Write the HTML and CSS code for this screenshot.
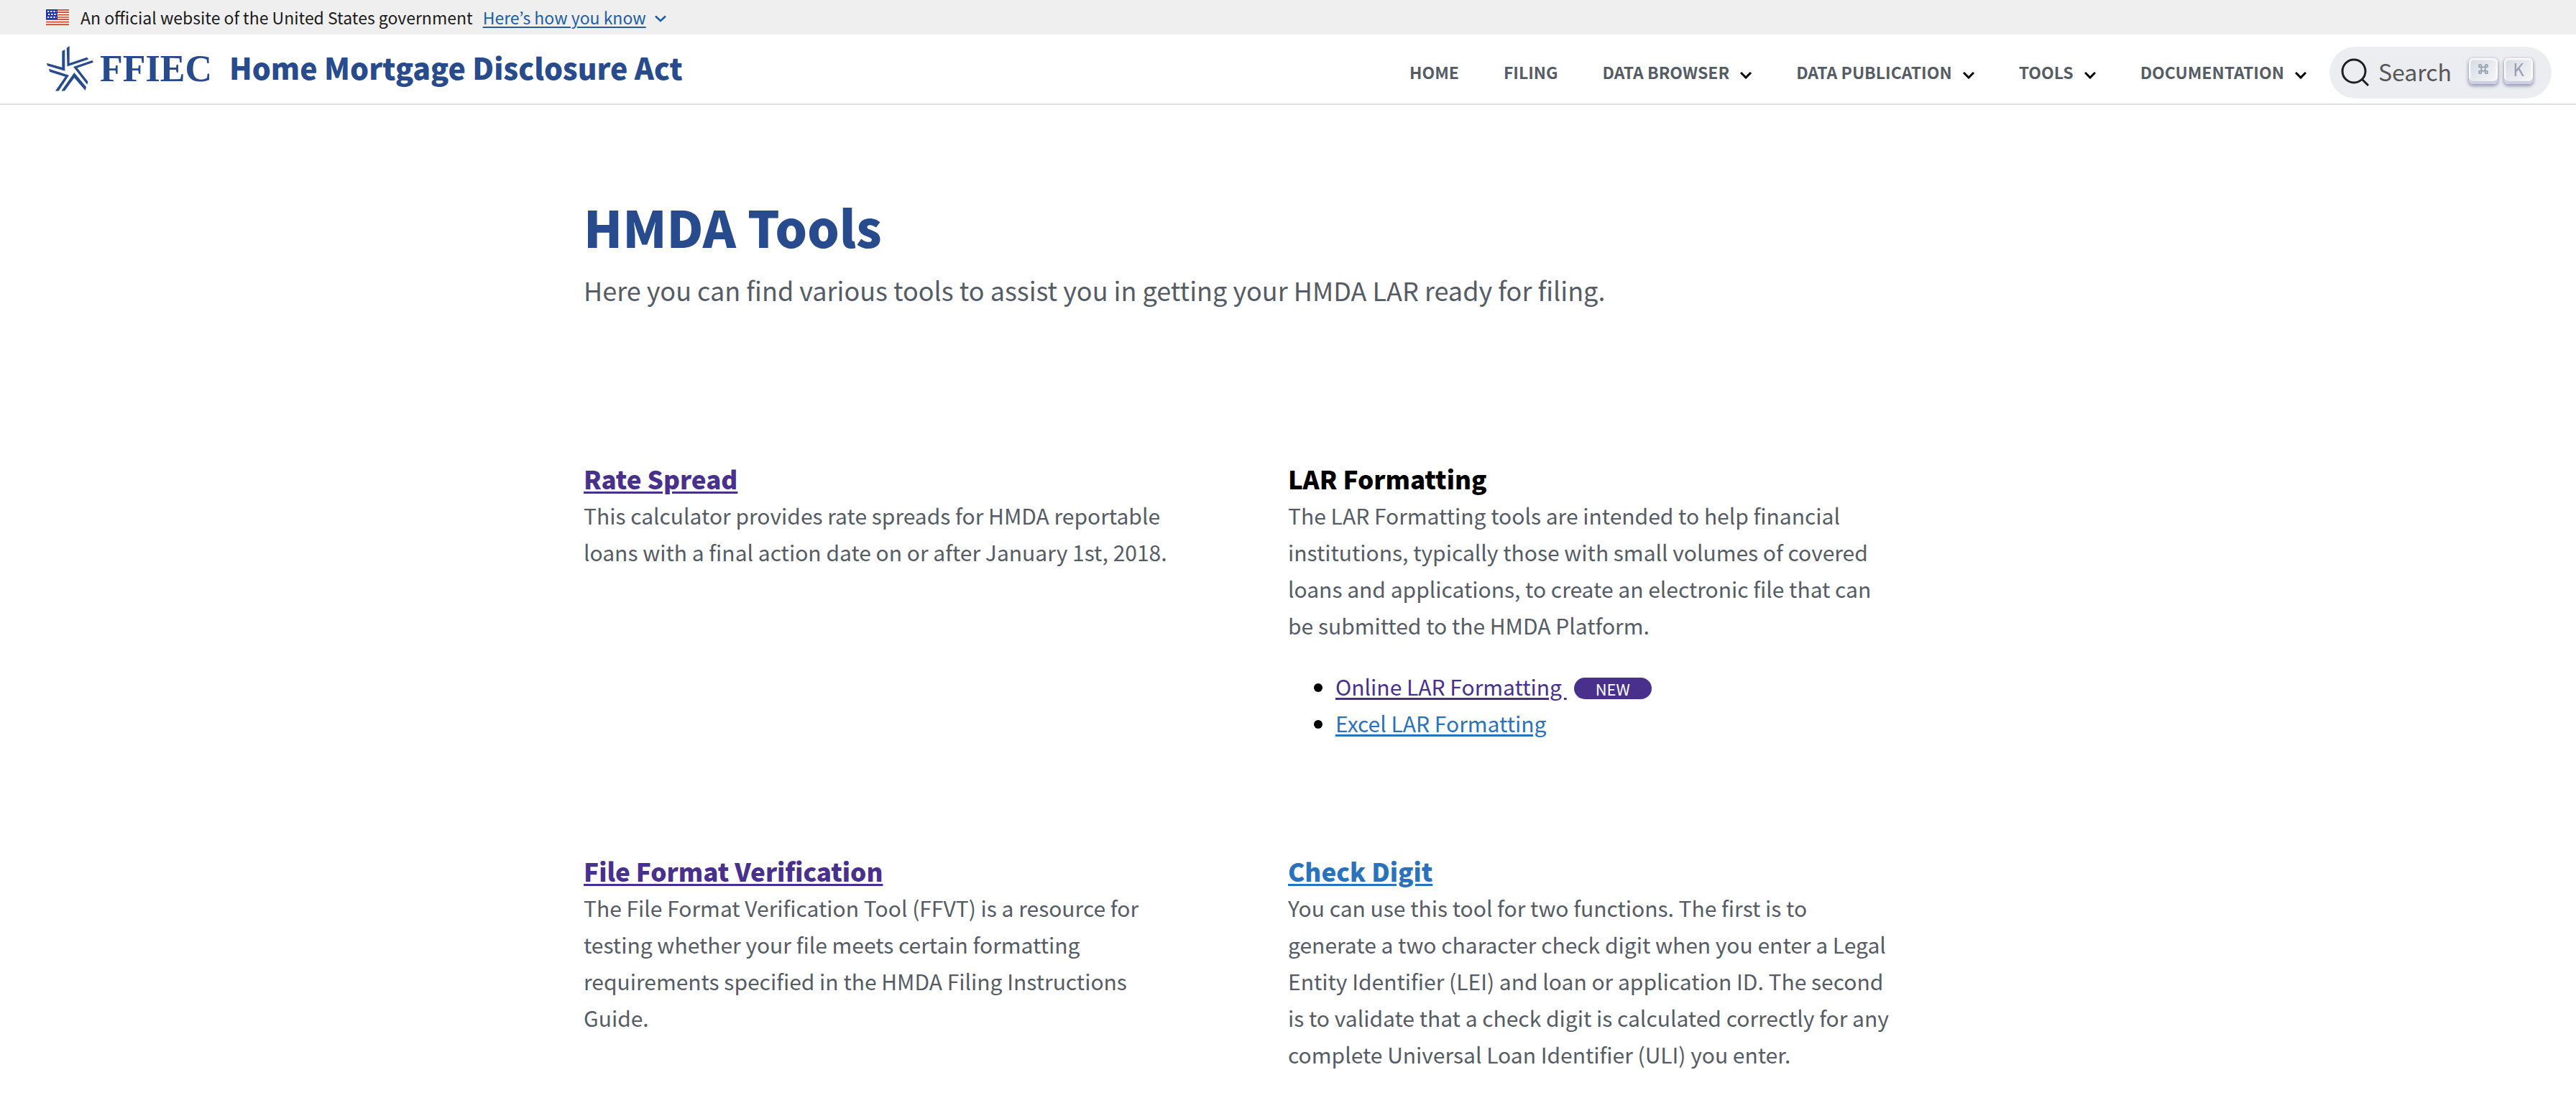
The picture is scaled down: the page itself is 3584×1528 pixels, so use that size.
FILE: index.html
```html
<!DOCTYPE html>
<html lang="en">
<head>
<meta charset="utf-8">
<title>HMDA Tools</title>
<link rel="stylesheet" href="styles.css">
</head>
<body>
<div class="banner">
  <svg class="flag" viewBox="0 0 32 22" aria-hidden="true">
    <rect width="32" height="22" fill="#fff"/>
    <path d="M0 .8h32M0 4.2h32M0 7.6h32M0 11h32M0 14.2h32M0 17.6h32M0 21.2h32" stroke="#db3e1f" stroke-width="1.7"/>
    <rect width="16" height="14" fill="#1e33b1"/>
    <path d="M2 3h13M3 7h13M2 11h13" stroke="#fff" stroke-width="2.2" stroke-dasharray="2.2 2"/>
  </svg>
  <span>An official website of the United States government</span>
  <button class="banner-button" type="button"><span>Here’s how you know</span>
    <svg class="chevron" viewBox="0 0 16 10" aria-hidden="true"><path d="M1 1.5l7 6.5 7-6.5" fill="none" stroke="currentColor" stroke-width="2.6"/></svg>
  </button>
</div>
<header class="header">
  <a class="brand" href="#">
    <svg class="star" viewBox="0 0 66 64" aria-hidden="true">
      <path fill="#274b8c" d="M1 23.7L22.3 29.8V7l4-2v29.700L2 27.500zM28.700 2.700L32.700 0v24L57 15.700l2.300 2.800-29.800 10zM64.300 20L66 22.700l-22.500 7.800 14.800 19-1 4.200L38 29zM39.300 37L56 57l-1.300 5-15.400-17.700L26 62.500h-4.700zM3.700 31.700l28.300 9-14.300 21.800H13l13.700-19.800L5.300 36z"/>
    </svg>
    <span class="ffiec">FFIEC</span>
    <span class="brand-title">Home Mortgage Disclosure Act</span>
  </a>
  <nav class="nav">
    <a href="#">HOME</a>
    <a href="#">FILING</a>
    <a href="#">DATA BROWSER <svg class="caret" viewBox="0 0 16 10" aria-hidden="true"><path d="M1 1l7 7 7-7"/></svg></a>
    <a href="#">DATA PUBLICATION <svg class="caret" viewBox="0 0 16 10" aria-hidden="true"><path d="M1 1l7 7 7-7"/></svg></a>
    <a href="#">TOOLS <svg class="caret" viewBox="0 0 16 10" aria-hidden="true"><path d="M1 1l7 7 7-7"/></svg></a>
    <a href="#">DOCUMENTATION <svg class="caret" viewBox="0 0 16 10" aria-hidden="true"><path d="M1 1l7 7 7-7"/></svg></a>
    <button class="search" type="button">
      <svg class="glass" viewBox="0 0 40 40" aria-hidden="true"><circle cx="18" cy="18" r="16"/><path d="M29 29l9 9"/></svg>
      <span class="search-label">Search</span>
      <kbd class="key"><svg viewBox="0 0 16 16" aria-hidden="true"><path d="M5 5h6v6H5zM5 5H3a2 2 0 1 1 2-2zM11 5V3a2 2 0 1 1 2 2zM11 11h2a2 2 0 1 1-2 2zM5 11v2a2 2 0 1 1-2-2z"/></svg></kbd>
      <kbd class="key">K</kbd>
    </button>
  </nav>
</header>
<main class="main">
  <h1>HMDA Tools</h1>
  <p class="lead">Here you can find various tools to assist you in getting your HMDA LAR ready for filing.</p>
  <div class="grid">
    <section>
      <h2><a class="visited" href="#">Rate Spread</a></h2>
      <p>This calculator provides rate spreads for HMDA reportable loans with a final action date on or after January 1st, 2018.</p>
    </section>
    <section>
      <h2>LAR Formatting</h2>
      <p>The LAR Formatting tools are intended to help financial institutions, typically those with small volumes of covered loans and applications, to create an electronic file that can be submitted to the HMDA Platform.</p>
      <ul>
        <li><a class="visited" href="#">Online LAR Formatting&nbsp;</a><span class="badge">NEW</span></li>
        <li><a href="#">Excel LAR Formatting</a></li>
      </ul>
    </section>
    <section>
      <h2><a class="visited" href="#">File Format Verification</a></h2>
      <p>The File Format Verification Tool (FFVT) is a resource for testing whether your file meets certain formatting requirements specified in the HMDA Filing Instructions Guide.</p>
    </section>
    <section>
      <h2><a href="#">Check Digit</a></h2>
      <p>You can use this tool for two functions. The first is to generate a two character check digit when you enter a Legal Entity Identifier (LEI) and loan or application ID. The second is to validate that a check digit is calculated correctly for any complete Universal Loan Identifier (ULI) you enter.</p>
    </section>
  </div>
</main>
</body>
</html>
```
FILE: styles.css
```css
* { box-sizing: border-box; }
body { margin: 0; background: #fff; color: #000; font-family: "Noto Sans CJK KR", "Noto Sans", sans-serif; font-size: 30px; line-height: 51px; }
h1, h2, p, ul { margin: 0; }
a { color: #2a72bc; text-decoration-thickness: 3px; text-underline-offset: 3px; }
button { font: inherit; border: 0; background: none; padding: 0; cursor: pointer; }
.banner { display: flex; align-items: center; height: 48px; padding: 0 64px; background: #efefef; color: #1b1b1b; font-size: 23px; line-height: 32px; }
.flag { width: 32px; height: 22px; margin-right: 16px; }
.banner-button { display: flex; align-items: center; gap: 12px; margin-left: 14px; color: #205ea3; }
.banner-button span { text-decoration: underline; text-decoration-thickness: 2px; text-underline-offset: 3px; }
.chevron { width: 16px; height: 10px; margin-top: 4px; }
.header { display: flex; justify-content: space-between; align-items: center; height: 98px; padding: 0 34px 0 64px; border-bottom: 2px solid #dfe0e0; }
.brand { display: flex; align-items: center; color: #274b8c; text-decoration: none; }
.star { width: 66px; height: 64px; }
.ffiec { margin: 0 24px 0 9px; font: 700 52px/60px "Liberation Serif", serif; }
.brand-title { padding-bottom: 6px; font-size: 41px; font-weight: 900; line-height: 60px; }
.nav { display: flex; align-items: center; gap: 62px; padding-top: 10px; }
.nav > a { display: flex; align-items: center; gap: 15px; padding-bottom: 2px; color: #565c65; font-size: 23px; font-weight: 700; line-height: 32px; text-decoration: none; }
.caret { width: 16px; height: 10px; margin-top: 10px; fill: none; stroke: #000; stroke-width: 3; }
.search { display: flex; align-items: center; height: 72px; margin-left: -30px; padding: 0 26px 0 16px; border-radius: 36px; background: #ebedf1; color: #565656; font-size: 32px; }
.glass { width: 40px; height: 40px; fill: none; stroke: #1c1e21; stroke-width: 3; }
.search-label { margin: 0 24px 0 12px; padding-bottom: 4px; }
.key { display: flex; align-items: center; justify-content: center; width: 40px; height: 36px; margin: 0 9px 4px 0; padding-bottom: 6px; border-radius: 6px; background: linear-gradient(315deg, #f8f8f8, #d5dbe4); box-shadow: inset 0 -4px #cdcde6, inset 0 0 2px 2px #fff, 0 2px 4px 1px #1e235a66; color: #969faf; font: 24px/30px "Noto Sans CJK KR", sans-serif; }
.key:last-child { margin-right: 0; }
.key svg { width: 14px; height: 14px; fill: none; stroke: #969faf; stroke-width: 2; }
.main { max-width: 1960px; margin: 0 auto; padding: 125px 0 0; }
h1 { color: #274b8c; font-size: 70px; font-weight: 900; line-height: 88px; }
.lead { margin-top: 14px; color: #565c65; font-size: 36px; line-height: 60px; }
.grid { display: grid; grid-template-columns: 1fr 1fr; row-gap: 154px; margin-top: 207px; }
section { padding-right: 132px; }
h2 { font-size: 35px; font-weight: 900; line-height: 52px; }
section p { color: #565c65; }
ul { margin-top: 34px; padding-left: 66px; }
.visited { color: #48308c; }
.badge { display: inline-block; margin-left: 10px; padding: 0 30px; border-radius: 15px; background: #48308c; color: #fff; font-size: 22px; line-height: 30px; }
```
